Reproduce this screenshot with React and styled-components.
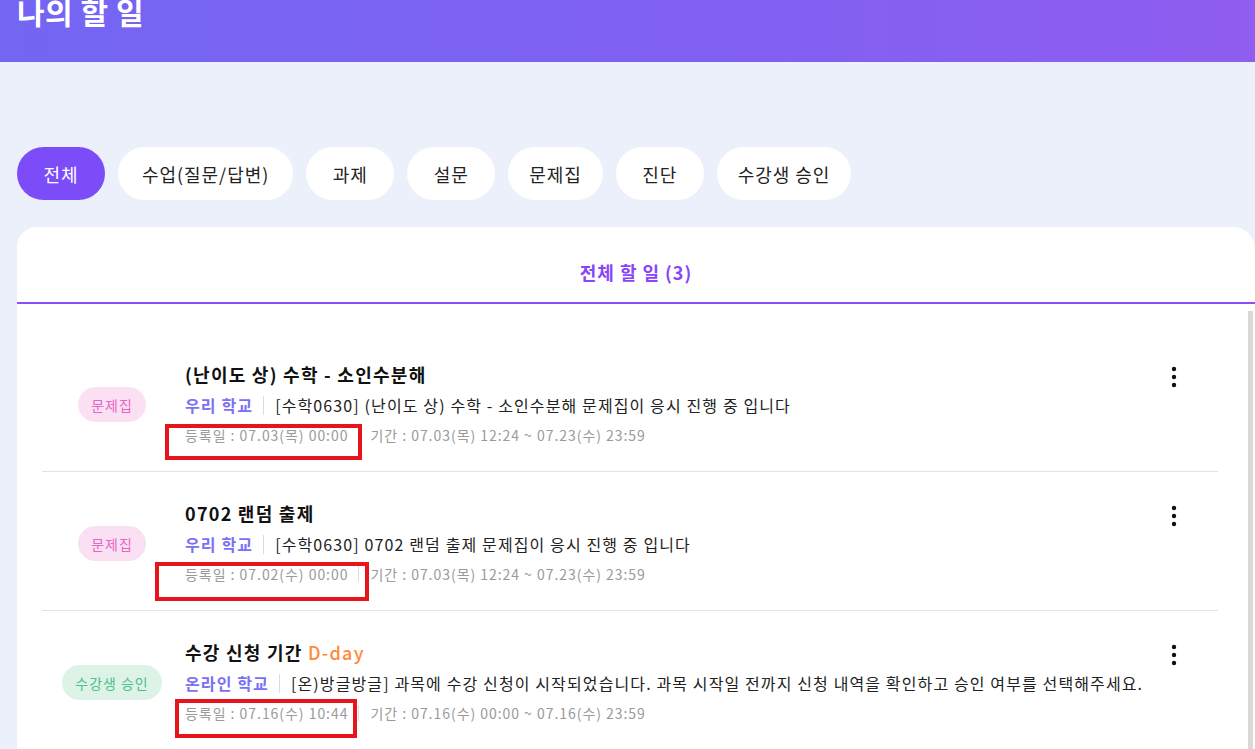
import React from "react";
import styled, { createGlobalStyle } from "styled-components";

const GlobalStyle = createGlobalStyle`
  * { box-sizing: border-box; }
  html, body { margin: 0; padding: 0; }
  body {
    background: #ecf0fb;
    font-family: "Noto Sans CJK KR", "Noto Sans", sans-serif;
    letter-spacing: 0.06em;
    color: #222;
    overflow: hidden;
  }
`;

const Page = styled.div`
  width: 1255px;
  min-height: 749px;
  background: #ecf0fb;
`;

const Header = styled.header`
  height: 62px;
  padding-left: 17px;
  background: linear-gradient(90deg, #7366f3 0%, #8160f1 60%, #8f5df0 100%);
  overflow: hidden;
`;

const PageTitle = styled.h1`
  margin: -4px 0 0;
  font-size: 30px;
  line-height: 30px;
  font-weight: 700;
  color: #fff;
  letter-spacing: 0.5px;
`;

const Body = styled.main`
  padding: 85px 0 0 17px;
`;

const Tabs = styled.nav`
  display: flex;
  gap: 13px;
`;

const Tab = styled.button`
  min-width: 88px;
  height: 53px;
  padding: 0 ${(p) => (p.$roomy ? "24px" : "21px")};
  border: none;
  border-radius: 27px;
  font-family: inherit;
  letter-spacing: inherit;
  font-size: 18px;
  font-weight: 400;
  background: ${(p) => (p.$active ? "#7c4cf9" : "#fff")};
  color: ${(p) => (p.$active ? "#fff" : "#222")};
  cursor: pointer;
`;

const Card = styled.section`
  margin-top: 27px;
  background: #fff;
  border-radius: 20px 22px 0 0;
  min-height: 560px;
  position: relative;
`;

const CardHead = styled.div`
  height: 77px;
  padding-top: 32px;
  text-align: center;
  border-bottom: 2px solid #8a4efb;
  font-size: 18px;
  line-height: 26px;
  font-weight: 600;
  color: #8a45fb;
`;

const List = styled.ul`
  list-style: none;
  margin: 0;
  padding: 29px 37px 0 25px;
`;

const Row = styled.li`
  display: flex;
  align-items: center;
  padding: 28px 0 23px;
  border-bottom: 1px solid #e3e3e3;
`;

const BadgeCell = styled.div`
  width: 140px;
  flex: none;
  display: flex;
  justify-content: center;
`;

const Badge = styled.span`
  display: inline-flex;
  align-items: center;
  height: 35px;
  padding: 0 13px;
  border-radius: 18px;
  font-size: 14px;
  background: ${(p) => (p.$tone === "green" ? "#ddf3e8" : "#fbe0f3")};
  color: ${(p) => (p.$tone === "green" ? "#4dbf87" : "#e566c6")};
`;

const Content = styled.div`
  flex: 1;
  margin-left: 3px;
  min-width: 0;
`;

const Title = styled.div`
  font-size: 18px;
  line-height: 26px;
  font-weight: 600;
  letter-spacing: 0.07em;
  color: #111;
`;

const DDay = styled.span`
  color: #ff8a3d;
  font-weight: 500;
`;

const Desc = styled.div`
  display: flex;
  align-items: center;
  margin-top: 5px;
  font-size: 16px;
  line-height: 26px;
  letter-spacing: 0.07em;
  color: #222;
  white-space: nowrap;
`;

const School = styled.span`
  font-weight: 700;
  color: #7a71f5;
`;

const Divider = styled.span`
  width: 1px;
  height: ${(p) => (p.$small ? "16px" : "19px")};
  margin: 0 11px 0 10px;
  background: #dcdcdc;
  flex: none;
`;

const Meta = styled.div`
  position: relative;
  display: flex;
  align-items: center;
  margin-top: 4px;
  font-size: 14px;
  line-height: 26px;
  color: #9a9a9a;
  white-space: nowrap;
`;

/* red outline drawn over the registration date */
const Highlight = styled.span`
  position: absolute;
  border: 4px solid #e8141c;
  pointer-events: none;
`;

const MoreButton = styled.button`
  align-self: flex-start;
  margin: 5px 34px 0 0;
  padding: 0;
  width: 20px;
  height: 22px;
  border: none;
  background: transparent;
  display: flex;
  justify-content: center;
  cursor: pointer;
`;

const ScrollThumb = styled.div`
  position: absolute;
  right: 2px;
  top: 84px;
  width: 5px;
  height: 600px;
  background: #d9d9d9;
`;

const MoreIcon = () => (
  <svg width="6" height="22" viewBox="0 0 6 22" aria-hidden="true">
    <circle cx="3" cy="3" r="2.2" fill="#111" />
    <circle cx="3" cy="11" r="2.2" fill="#111" />
    <circle cx="3" cy="19" r="2.2" fill="#111" />
  </svg>
);

const tabs = [
  { label: "전체" },
  { label: "수업(질문/답변)", roomy: true },
  { label: "과제" },
  { label: "설문" },
  { label: "문제집" },
  { label: "진단" },
  { label: "수강생 승인" },
];

const todos = [
  {
    badge: "문제집",
    tone: "pink",
    title: "(난이도 상) 수학 - 소인수분해",
    school: "우리 학교",
    desc: "[수학0630] (난이도 상) 수학 - 소인수분해 문제집이 응시 진행 중 입니다",
    reg: "등록일 : 07.03(목) 00:00",
    period: "기간 : 07.03(목) 12:24 ~ 07.23(수) 23:59",
    mark: { left: -20, top: 2, width: 197, height: 36 },
  },
  {
    badge: "문제집",
    tone: "pink",
    title: "0702 랜덤 출제",
    school: "우리 학교",
    desc: "[수학0630] 0702 랜덤 출제 문제집이 응시 진행 중 입니다",
    reg: "등록일 : 07.02(수) 00:00",
    period: "기간 : 07.03(목) 12:24 ~ 07.23(수) 23:59",
    mark: { left: -30, top: 1, width: 214, height: 39 },
  },
  {
    badge: "수강생 승인",
    tone: "green",
    title: "수강 신청 기간",
    dday: "D-day",
    school: "온라인 학교",
    desc: "[온)방글방글] 과목에 수강 신청이 시작되었습니다. 과목 시작일 전까지 신청 내역을 확인하고 승인 여부를 선택해주세요.",
    reg: "등록일 : 07.16(수) 10:44",
    period: "기간 : 07.16(수) 00:00 ~ 07.16(수) 23:59",
    mark: { left: -10, top: -1, width: 182, height: 39 },
  },
];

export default function App() {
  return (
    <Page>
      <GlobalStyle />
      <Header>
        <PageTitle>나의 할 일</PageTitle>
      </Header>
      <Body>
        <Tabs>
          {tabs.map((t, i) => (
            <Tab key={t.label} $active={i === 0} $roomy={t.roomy}>
              {t.label}
            </Tab>
          ))}
        </Tabs>
        <Card>
          <CardHead>전체 할 일 (3)</CardHead>
          <ScrollThumb />
          <List>
            {todos.map((item) => (
              <Row key={item.title}>
                <BadgeCell>
                  <Badge $tone={item.tone}>{item.badge}</Badge>
                </BadgeCell>
                <Content>
                  <Title>
                    {item.title}
                    {item.dday && <DDay> {item.dday}</DDay>}
                  </Title>
                  <Desc>
                    <School>{item.school}</School>
                    <Divider />
                    <span>{item.desc}</span>
                  </Desc>
                  <Meta>
                    <span>{item.reg}</span>
                    <Divider $small />
                    <span>{item.period}</span>
                    <Highlight
                      style={{
                        left: item.mark.left,
                        top: item.mark.top,
                        width: item.mark.width,
                        height: item.mark.height,
                      }}
                    />
                  </Meta>
                </Content>
                <MoreButton aria-label="더보기">
                  <MoreIcon />
                </MoreButton>
              </Row>
            ))}
          </List>
        </Card>
      </Body>
    </Page>
  );
}
